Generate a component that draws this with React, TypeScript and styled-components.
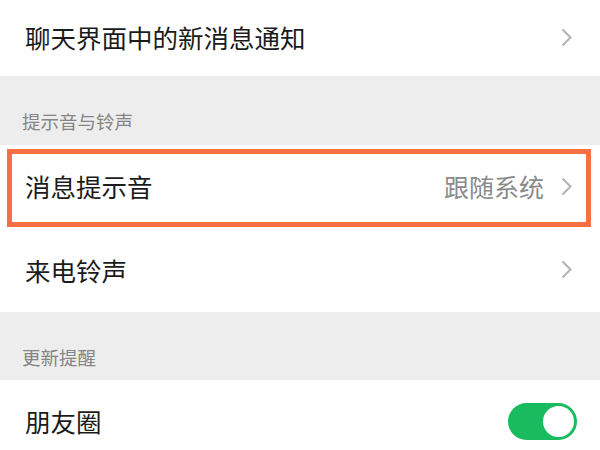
import React, { FunctionComponent } from 'react'
import styled, { createGlobalStyle } from 'styled-components'

const GlobalStyle = createGlobalStyle`
  html, body {
    margin: 0;
    padding: 0;
    background: #ffffff;
  }
  body {
    font-family: 'Noto Sans CJK SC', 'Noto Sans', sans-serif;
    -webkit-font-smoothing: antialiased;
  }
`

const Page = styled.div`
  width: 600px;
  height: 450px;
  overflow: hidden;
  display: flex;
  flex-direction: column;
  background: #ffffff;
`

const Row = styled.div<{ $height: number; $highlight?: boolean }>`
  position: relative;
  flex: 0 0 auto;
  height: ${(p) => p.$height}px;
  display: flex;
  align-items: center;
  padding: 0 28px 2px 25px;
  box-sizing: border-box;
  background: #ffffff;

  ${(p) =>
    p.$highlight &&
    `
    &::after {
      content: '';
      position: absolute;
      top: 4px;
      left: 7px;
      right: 9px;
      bottom: 2px;
      border: 5px solid #f76f42;
      pointer-events: none;
    }
  `}
`

const Title = styled.span`
  flex: 1;
  font-size: 25.5px;
  line-height: 30px;
  color: #1b1b1b;
  white-space: nowrap;
`

const Value = styled.span`
  font-size: 25px;
  line-height: 30px;
  color: #8a8a8a;
  margin-right: 17px;
`

const SectionLabel = styled.div<{ $height: number }>`
  flex: 0 0 auto;
  height: ${(p) => p.$height}px;
  box-sizing: border-box;
  padding: 35px 0 0 22px;
  background: #ededed;
  font-size: 18.5px;
  line-height: 20px;
  color: #858585;
`

const Chevron = styled.svg`
  width: 11px;
  height: 19px;
  flex: 0 0 auto;
`

const Track = styled.div<{ $on: boolean }>`
  width: 69px;
  height: 37px;
  border-radius: 19px;
  background: ${(p) => (p.$on ? '#18bb5d' : '#e5e5e5')};
  display: flex;
  align-items: center;
  justify-content: ${(p) => (p.$on ? 'flex-end' : 'flex-start')};
  padding: 0 3px;
  box-sizing: border-box;
  margin-right: -5px;
`

const Knob = styled.div`
  width: 31px;
  height: 31px;
  border-radius: 50%;
  background: #ffffff;
`

const Arrow: FunctionComponent = () => (
  <Chevron viewBox="0 0 11 19">
    <path d="M1.5 1.5 L9.5 9.5 L1.5 17.5" fill="none" stroke="#b3b3b3" strokeWidth="2" />
  </Chevron>
)

const App: FunctionComponent = () => (
  <>
    <GlobalStyle />
    <Page>
      <Row $height={76}>
        <Title>聊天界面中的新消息通知</Title>
        <Arrow />
      </Row>
      <SectionLabel $height={69}>提示音与铃声</SectionLabel>
      <Row $height={84} $highlight>
        <Title>消息提示音</Title>
        <Value>跟随系统</Value>
        <Arrow />
      </Row>
      <Row $height={83}>
        <Title>来电铃声</Title>
        <Arrow />
      </Row>
      <SectionLabel $height={68}>更新提醒</SectionLabel>
      <Row $height={84}>
        <Title>朋友圈</Title>
        <Track $on>
          <Knob />
        </Track>
      </Row>
    </Page>
  </>
)

export default App
